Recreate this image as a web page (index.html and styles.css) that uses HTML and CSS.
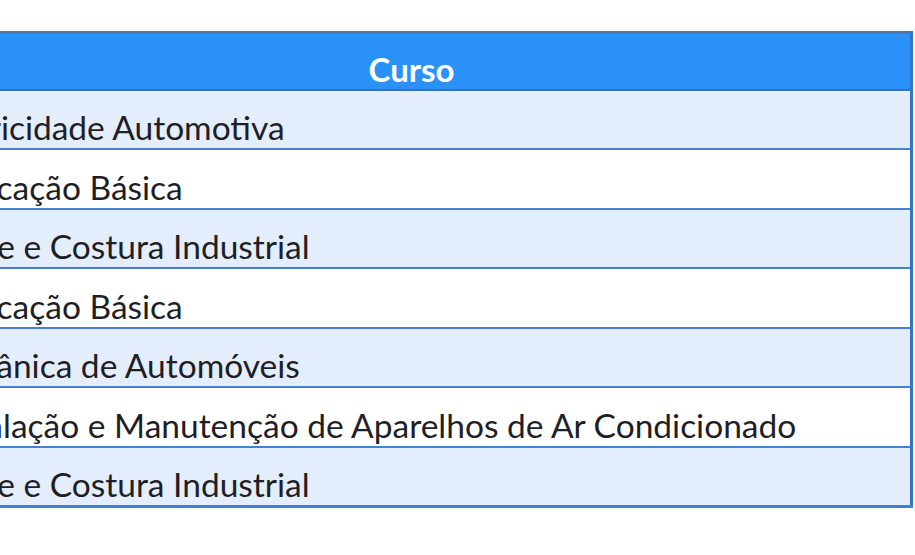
FILE: index.html
```html
<!DOCTYPE html>
<html lang="pt">
<head>
<meta charset="utf-8">
<title>Cursos</title>
<link rel="stylesheet" href="styles.css">
</head>
<body>
<div class="viewport">
  <table class="cursos">
    <thead>
      <tr><th>Curso</th></tr>
    </thead>
    <tbody>
      <tr class="alt"><td>Eletricidade Automotiva</td></tr>
      <tr><td>Edificação Básica</td></tr>
      <tr class="alt"><td>Corte e Costura Industrial</td></tr>
      <tr><td>Edificação Básica</td></tr>
      <tr class="alt"><td>Mecânica de Automóveis</td></tr>
      <tr><td>Instalação e Manutenção de Aparelhos de Ar Condicionado</td></tr>
      <tr class="alt"><td>Corte e Costura Industrial</td></tr>
    </tbody>
  </table>
</div>
</body>
</html>
```

FILE: styles.css
```css
html, body {
  margin: 0;
  padding: 0;
  background: #ffffff;
}

.viewport {
  width: 915px;
  height: 555px;
  overflow: hidden;
  padding-top: 31px;
  box-sizing: border-box;
}

.cursos {
  margin-left: -87px;
  width: 1000px;
  border-collapse: collapse;
  font-family: Lato, "Open Sans", "Liberation Sans", sans-serif;
  border-top: 3px solid #4c78ad;
  border-right: 3px solid #2f74cf;
  border-bottom: 3px solid #3b7fd6;
}

.cursos th {
  height: 57px;
  padding: 0;
  box-sizing: border-box;
  background: #2a91f6;
  color: #ffffff;
  font-weight: 700;
  font-size: 33px;
  line-height: 40px;
  text-align: center;
  vertical-align: bottom;
  border-bottom: 2px solid #3d6fb4;
}

.cursos td {
  height: 59.6px;
  padding: 0 0 1px 19px;
  font-size: 33.5px;
  color: #1e1e26;
  vertical-align: bottom;
  box-sizing: border-box;
  border-bottom: 2px solid #4680d2;
  white-space: nowrap;
  line-height: 40px;
}

.cursos tr.alt td {
  background: #e3edfb;
}

.cursos tbody tr:last-child td {
  border-bottom: none;
}
```
